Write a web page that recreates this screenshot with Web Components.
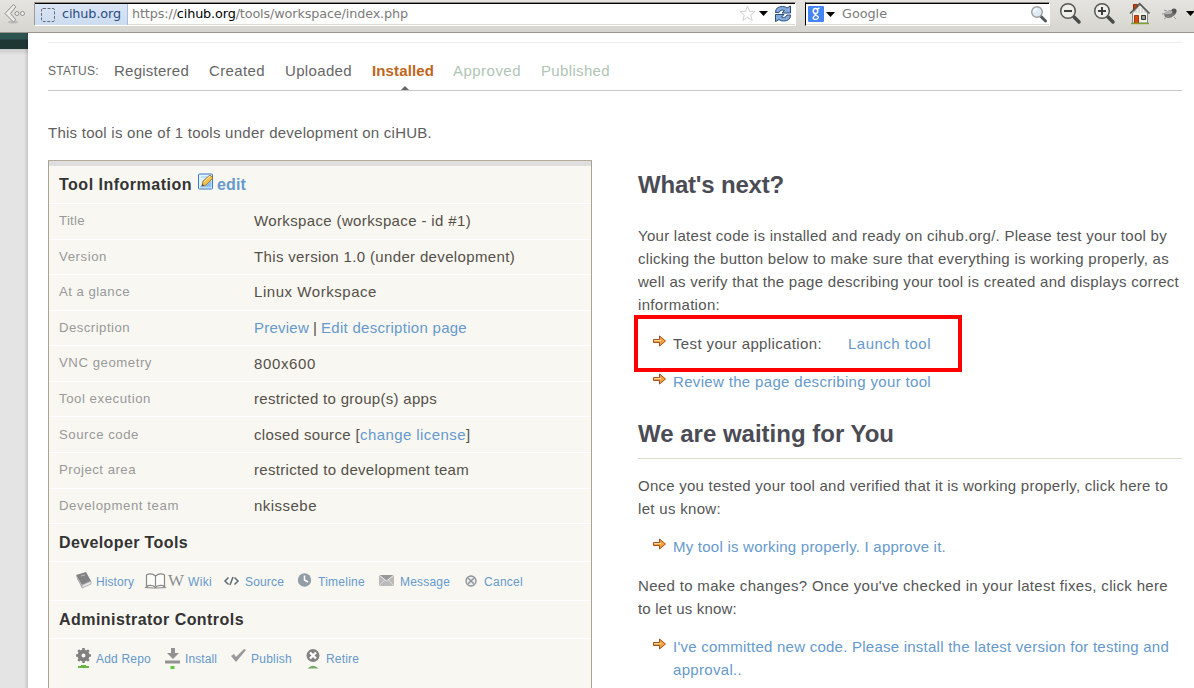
<!DOCTYPE html>
<html lang="en">
<head>
<meta charset="utf-8">
<title>Workspace tool status</title>
<style>
html,body{margin:0;height:688px;overflow:hidden;background:#fff;font-family:"Liberation Sans",Arial,sans-serif;color:#555}
</style>
</head>
<body>
<app-window></app-window>
<script>
const define = (name, html) => customElements.define(name, class extends HTMLElement {
  constructor(){ super(); const t=document.createElement('template'); t.innerHTML=html; this.attachShadow({mode:'open'}).append(t.content.cloneNode(true)); }
});

define('app-window', `<style>
:host{display:flex;flex-direction:column;height:688px;width:1194px;overflow:hidden}
main{display:flex;flex:1;min-height:0}
aside{width:28px;background:linear-gradient(90deg,transparent 24px,#0002),linear-gradient(#2e5452 0 6px,#1e3634 7px 16px,#c9c9c9 16px,#e4e4e4 22px);flex:none}
.page{flex:1;padding:9px 12px 0 20px;min-width:0}
.rule{height:1px;background:#ededed}
.cols{display:grid;grid-template-columns:544px 544px;column-gap:46px;align-items:start}
.intro{height:69px;display:flex;align-items:center;padding-top:14px;box-sizing:border-box;font-size:15px;color:#606060}
</style>
<browser-bar></browser-bar>
<main><aside></aside><div class="page"><div class="rule"></div><status-bar></status-bar>
<div class="intro"><ui-text w="384">This tool is one of 1 tools under development on ciHUB.</ui-text></div>
<div class="cols"><tool-panel></tool-panel><next-steps></next-steps></div></div></main>`);

define('browser-bar', `<style>
:host{display:flex;height:33px;box-sizing:border-box;border-bottom:1px solid #9a958c;background:linear-gradient(#e6e4e0,#d6d5cf);flex:none;font-family:"DejaVu Sans",sans-serif;font-size:12.8px;color:#7b7b7b;align-items:flex-start}
svg{display:block;flex:none}
.field{height:24px;margin-top:2px;box-sizing:border-box;background:#fff;border:1px solid #a09b93;border-top-color:#8e8982;border-right-color:#fff;border-bottom-color:#fff;box-shadow:inset 0 1px #000,inset 0 -1px #dedbd5;display:flex;align-items:center}
.url{width:762px;margin-left:8px}
.site{align-self:stretch;margin-top:1px;background:linear-gradient(#dbe5f4,#ccdcf0);border-right:1px solid #a8bddb;width:93px;box-sizing:border-box;display:flex;align-items:center;gap:6px;padding-left:5px;color:#2a4b82;flex:none}
.site ui-text,.path{position:relative;top:-1px}
.path{margin-left:4px;flex:1;display:flex}b{font-weight:400;color:#000}
.search{width:245px;margin-left:9px;padding-left:2px;border-left:1px solid #000}
.search ui-text{position:relative;top:-1px;margin-left:6px;flex:1}
</style>
<svg width="26" height="32" viewBox="0 0 26 32"><ellipse cx="13" cy="22" rx="5" ry="1.5" fill="#bdbbb6"/><path d="M13.5 4.500 5 13.500 13.500 22l2.300-2.200-5.300-6.300 5.300-6.700z" fill="#ecebe8" stroke="#908e89"/><circle cx="17" cy="13.500" r="2" fill="#eee" stroke="#918f8b"/><circle cx="22.500" cy="13.500" r="2" fill="#eee" stroke="#918f8b"/></svg>
<div class="field url">
 <div class="site"><svg width="16" height="16" viewBox="0 0 16 16"><rect x="1.500" y="1.500" width="13" height="13" rx="1.500" fill="none" stroke="#666d77" stroke-dasharray="3 1.500"/></svg><ui-text w="59">cihub.org</ui-text></div>
 <div class="path"><ui-text w="276">https://<b>cihub.org</b>/tools/workspace/index.php</ui-text></div>
 <svg width="56" height="20" viewBox="739 4 56 20"><path d="m747.500 6 2 5.300 5.500.2-4.300 3.500 1.500 5.400-4.700-3.100-4.700 3.100 1.500-5.400-4.300-3.500 5.500-.2z" fill="#fff" stroke="#d0d0d0"/><path d="M759 11h9l-4.500 5z" fill="#000"/><g fill="#85abd9" stroke="#284b80" stroke-linejoin="round"><path d="M775.500 12.500q0-6 7-6 3 0 4.500 1.500l3.500-2v7H782l2.500-2.500q-4-1.500-5.500 2z"/><path d="M790.500 15q0 6-7 6-3 0-4.500-1.500l-3.500 2v-7h8.500l-2.500 2.500q4 1.500 5.500-2z"/></g></svg>
</div>
<div class="field search"><svg width="28" height="18" viewBox="0 0 28 18"><rect y="1" width="16" height="16" rx="1" fill="#4385f4"/><g fill="none" stroke="#fff" stroke-width="1.400"><ellipse cx="7.500" cy="6" rx="2.300" ry="2.500"/><path d="M9 4.200 11.500 3M8 8.500q-2 1 .2 1.800 2.600 1 2 2.700-1 1.800-4 1.200-2.500-1 .8-3.700"/></g><path d="M18 7h9l-4.500 5z" fill="#000"/></svg><ui-text w="45">Google</ui-text>
<svg width="20" height="20" viewBox="0 0 20 20"><path d="m11.500 12 5 5" stroke="#54595b" stroke-width="3" stroke-linecap="round"/><circle cx="8" cy="8" r="5.300" fill="#dfebf5" stroke="#9c9f9e" stroke-width="1.400"/><path d="M5 8q0-3 3-3" stroke="#fff" fill="none" stroke-width="1.500"/></svg></div>
<svg width="144" height="32" viewBox="1050 0 144 32"><path d="m1074 17 5 5" stroke="#484b4a" stroke-width="3.500" stroke-linecap="round"/><circle cx="1068" cy="11" r="7.300" fill="#eeeeeb" stroke="#555753" stroke-width="1.500"/><path d="M1064 11h8" stroke="#3d403d" stroke-width="2"/><path d="m1108 17 5 5" stroke="#484b4a" stroke-width="3.500" stroke-linecap="round"/><circle cx="1102" cy="11" r="7.300" fill="#eeeeeb" stroke="#555753" stroke-width="1.500"/><path d="M1098 11h8M1102 7v8" stroke="#3d403d" stroke-width="2"/>
<path d="M1133.500 4.500h4v6h-4z" fill="#d2430c" stroke="#8d2b08"/><path d="M1132.500 13 1140 5l7.500 8v10h-15z" fill="#f1f1ed" stroke="#888"/><path d="M1136 10v3M1139 8v5M1142 8v5M1145 11v2" stroke="#c6c6c2"/><path d="m1130 13.500 9.700-10 9.800 10" fill="none" stroke="#555753" stroke-width="1.500"/><path d="M1134.500 15.500h4v8h-4z" fill="#d84b0c" stroke="#a73507"/><path d="M1141.500 15.500h4v4h-4z" fill="#979c92" stroke="#333"/><path d="M1131 23.500h18" stroke="#80a030" stroke-width="1.400"/>
<g fill="#686868"><ellipse cx="1170" cy="14" rx="6" ry="3.600" transform="rotate(-18 1170 14)" fill="#777"/><circle cx="1174" cy="11" r="2.600" fill="#555"/><path d="m1162 14 5-1m-3 6 5-3m5 1 2 2m-9-8-3-1" stroke="#999"/><ellipse cx="1168.500" cy="12.500" rx="4" ry="1.700" fill="#b4b4b4" transform="rotate(-10 1168 12)"/></g><path d="M1186 11h9l-4.500 5z"/></svg>`);

define('status-bar', `<style>
:host{display:flex;height:48px;box-sizing:border-box;border-bottom:1px solid #c9c9c9;align-items:center;font-size:15px;padding-top:8px;position:relative;color:#666}
.l{font-size:12px;margin-right:15px;padding-top:1px}ui-text{margin-right:20px}.on{color:#c0651a;font-weight:700;margin-right:19px}.off{color:#b0c4b5}
i{position:absolute;left:353px;bottom:0;border:4px solid transparent;border-bottom:4px solid #666;border-top:0}
</style><ui-text class="l" w="51">STATUS:</ui-text><ui-text w="75">Registered</ui-text><ui-text w="56">Created</ui-text><ui-text w="67">Uploaded</ui-text><ui-text w="62" class="on">Installed</ui-text><ui-text w="68" class="off">Approved</ui-text><ui-text w="69" class="off">Published</ui-text><i></i>`);

define('info-row', `<style>
:host{display:grid;grid-template-columns:195px 1fr;align-items:start;padding:8px 10px 0;border-bottom:1px solid #fff;font-size:15px;line-height:17px;color:#555048;box-sizing:border-box}
::slotted([slot=label]){font-size:13.2px;line-height:15px;color:#999;margin-top:var(--label-drop,1px)}
div{display:flex;padding-top:var(--value-drop,0)}
</style><slot name="label"></slot><div><slot></slot></div>`);

define('tool-panel', `<style>
:host{display:grid;grid-template-rows:38px 36px 35px 36px 35px 36px 35px 36px 36px 35px 38px 39px 38px 60px;box-sizing:border-box;border:1px solid #aaa18e;border-top-color:#b3aa98;background:#f8f7f2;border-bottom:0;height:540px;padding-top:5px;box-shadow:inset 0 5px #dedede;overflow:hidden}
h3{margin:0;font-size:16px;color:#333;display:flex;align-items:center;padding:0 10px;border-bottom:1px solid #fff}
h3 svg{margin:-6px 3px 0 6px}
.a{color:#6699cc}
nav{display:grid;align-items:center;padding-left:26px;border-bottom:1px solid #fff;font-size:12px;color:#69c;justify-content:start;padding-top:2px}
nav.d{grid-template-columns:21px 48px 44px 37px 20px 53px 20px 62px 20px 64px 20px 60px}
nav.b{grid-template-columns:21px 68px 21px 45px 21px 55px 20px 50px;height:37px;border:0;box-sizing:border-box}
nav svg{display:block;overflow:visible;position:relative;left:1px;top:-1px}
nav.d svg:nth-of-type(n+3){left:-1px}
.drop{--value-drop:1px}.low{--value-drop:1px;--label-drop:2px}
</style>
<h3><ui-text w="133">Tool Information</ui-text><svg width="16" height="17" viewBox="0 0 16 17"><rect x=".5" y="1" width="14" height="15" rx="1" fill="#e3f2ff" stroke="#3979c5"/><path d="M3 4h7M2 14h11V8L9 12H4z" fill="#83baf1" stroke="#9bcaf5"/><path d="m4 13 1-5 7-6 3 3-7 7z" fill="#f5bf4c" stroke="#9b7c49"/><path d="m6 9 6-6" stroke="#fff1af"/><path d="m4 13 .5-2 1.500 1.500z" fill="#333"/></svg><ui-text class="a" w="29">edit</ui-text></h3>
<info-row><ui-text slot="label" w="26">Title</ui-text><ui-text w="217">Workspace (workspace - id #1)</ui-text></info-row>
<info-row><ui-text slot="label" w="48">Version</ui-text><ui-text w="261">This version 1.0 (under development)</ui-text></info-row>
<info-row><ui-text slot="label" w="71">At a glance</ui-text><ui-text w="123">Linux Workspace</ui-text></info-row>
<info-row><ui-text slot="label" w="71">Description</ui-text><ui-text w="55" class="a">Preview</ui-text><ui-text w="12"> | </ui-text><ui-text w="146" class="a">Edit description page</ui-text></info-row>
<info-row class="drop"><ui-text slot="label" w="93">VNC geometry</ui-text><ui-text w="62">800x600</ui-text></info-row>
<info-row><ui-text slot="label" w="92">Tool execution</ui-text><ui-text w="183">restricted to group(s) apps</ui-text></info-row>
<info-row class="low"><ui-text slot="label" w="80">Source code</ui-text><ui-text w="106">closed source [</ui-text><ui-text w="106" class="a">change license</ui-text><ui-text w="5">]</ui-text></info-row>
<info-row><ui-text slot="label" w="77">Project area</ui-text><ui-text w="215">restricted to development team</ui-text></info-row>
<info-row><ui-text slot="label" w="120">Development team</ui-text><ui-text w="63">nkissebe</ui-text></info-row>
<h3><ui-text w="129">Developer Tools</ui-text></h3>
<nav class="d">
<svg width="16" height="18" viewBox="0 0 16 18"><path d="m0 3 10-3 5 9-9 4z" fill="#828282"/><path d="m0 3 6 10v3L1 7z" fill="#aaa"/><path d="m6 13 9-4v3l-9 4z" fill="#e8e8e8" stroke="#999" stroke-width=".7"/><path d="m5 4 4-1" stroke="#bbb"/></svg><ui-text w="38">History</ui-text>
<svg width="42" height="18" viewBox="0 0 42 18"><path d="M10.500 4Q6 .5 1.500 3v11q5-1.500 9 1 4-2.500 9-1V3Q15 .5 10.500 4v10M3 14l-2 1.500 8 .5h3l8-.5-2-1.500" fill="#fbfbf8" stroke="#888" stroke-width="1.200"/><text x="23" y="14" font-family="Liberation Serif,serif" font-size="17" textLength="16" lengthAdjust="spacingAndGlyphs" fill="#8b8e91">W</text></svg><ui-text w="24">Wiki</ui-text>
<svg width="16" height="14" viewBox="0 0 16 14"><path d="M4.500 3.500 1 7l3.500 3.500M10.500 3.500 14 7l-3.500 3.500M9 3 6 11" fill="none" stroke="#5d6973" stroke-width="1.500"/></svg><ui-text w="39">Source</ui-text>
<svg width="15" height="18" viewBox="0 0 15 18"><circle cx="7.500" cy="8" r="6.700" fill="#929da7"/><path d="M7.500 3.500V8L11 10" fill="none" stroke="#fff" stroke-width="1.500"/></svg><ui-text w="47">Timeline</ui-text>
<svg width="16" height="14" viewBox="0 0 16 14"><path d="M0 1h15v11H0z" fill="#bababa"/><path d="m0 1 7.500 6L15 1" fill="#999" stroke="#eee"/><path d="m0 12 5.500-6m9.500 6-5.500-6" stroke="#ddd"/></svg><ui-text w="50">Message</ui-text>
<svg width="14" height="16" viewBox="0 0 14 16"><circle cx="8" cy="8" r="5" fill="#eee" stroke="#8d9298" stroke-width="1.300"/><path d="m5.200 5.200 5.600 5.600m0-5.600-5.600 5.600" stroke="#8d9298" stroke-width="1.400"/></svg><ui-text w="39">Cancel</ui-text></nav>
<h3><ui-text w="185">Administrator Controls</ui-text></h3>
<nav class="b">
<svg width="16" height="20" viewBox="0 0 16 20"><circle cx="7.500" cy="7.500" r="4" fill="none" stroke="#808080" stroke-width="4"/><path d="M7.500 0v3m0 9v3M0 7.500h3m9 0h3M2.200 2.200l2 2m6.600 6.600 2 2m0-10.600-2 2M4.200 10.800l-2 2" stroke="#808080" stroke-width="2.500"/><path d="M2 20v-2h3v-1h5v1h3v2z" fill="#67b945"/></svg><ui-text w="55">Add Repo</ui-text>
<svg width="16" height="20" viewBox="0 0 16 20"><path d="M6 0h4v5h4l-6 6-6-6h4zM0 12.500h15v3H0z" fill="#929292"/><path d="M5.500 18h4v3h-4z" fill="#62c544"/></svg><ui-text w="32">Install</ui-text>
<svg width="16" height="20" viewBox="0 0 16 20"><path d="m0 8 3-2 2 3 8-8 2 1L5 14z" fill="#999"/></svg><ui-text w="41">Publish</ui-text>
<svg width="16" height="20" viewBox="0 0 16 20"><circle cx="6" cy="7.500" r="6.500" fill="#828282"/><path d="m3 4.500 6 6m0-6-6 6" stroke="#fff" stroke-width="2.400"/><path d="M.5 20.500q5.500-5.500 11 0z" fill="#75a966"/></svg><ui-text w="33">Retire</ui-text></nav>`);

define('arrow-item', `<style>:host{display:flex;align-items:flex-start;padding-left:15px;line-height:23px}svg{margin:3px 6px 0 0;flex:none}</style>
<svg width="14" height="13" viewBox="0 0 14 13"><path d="M.5 4.500h6V1L12.500 6l-6 5V7.500h-6z" fill="#f8a23e" stroke="#a0501f"/><path d="M1 5.500h7" stroke="#ffdca0"/></svg><div><slot></slot></div>`);

define('next-steps', `<style>
:host{display:block;font-size:15px;line-height:23px;color:#555}
h2{margin:0;font-size:24px;line-height:30px;color:#4b4b55;height:30px}
h2,p>ui-text,arrow-item ui-text.b{display:block}
p{margin:0}.a{color:#69c}
.one{padding-top:10px}.one+p{margin-top:24px}
.box{border:4px solid #f00;margin:-1px 0 0 -4px;width:328px;height:57px;box-sizing:border-box;padding-top:13px}
.box ui-text+ui-text{margin-left:26px}
.two{margin-top:26px;height:39px;border-bottom:1px solid #dddcd0}
</style>
<h2 class="one"><ui-text w="146">What's next?</ui-text></h2>
<p><ui-text w="529">Your latest code is installed and ready on cihub.org/. Please test your tool by</ui-text><ui-text w="531">clicking the button below to make sure that everything is working properly, as</ui-text><ui-text w="541">well as verify that the page describing your tool is created and displays correct</ui-text><ui-text w="82">information:</ui-text></p>
<div class="box"><arrow-item><ui-text w="149">Test your application:</ui-text><ui-text class="a" w="83">Launch tool</ui-text></arrow-item></div>
<arrow-item style="margin-top:-2px"><ui-text class="a" w="258">Review the page describing your tool</ui-text></arrow-item>
<h2 class="two"><ui-text w="256">We are waiting for You</ui-text></h2>
<p style="margin-top:15px"><ui-text w="530">Once you tested your tool and verified that it is working properly, click here to</ui-text><ui-text w="83">let us know:</ui-text></p>
<arrow-item style="margin-top:15px"><ui-text class="a" w="273">My tool is working properly. I approve it.</ui-text></arrow-item>
<p style="margin-top:16px"><ui-text w="530">Need to make changes? Once you've checked in your latest fixes, click here</ui-text><ui-text w="99">to let us know:</ui-text></p>
<arrow-item style="margin-top:15px"><ui-text class="a b" w="496">I've committed new code. Please install the latest version for testing and</ui-text><ui-text class="a b" w="69">approval..</ui-text></arrow-item>`);

/* A run of text tracked out or in to a set measure (the w attribute, in px). */
customElements.define('ui-text', class extends HTMLElement {
  constructor(){ super(); this.attachShadow({mode:'open'}).innerHTML='<style>:host{display:inline-block;white-space:pre;flex:none}span{display:inline-block}</style><span><slot></slot></span>'; }
  connectedCallback(){
    const run=this.shadowRoot.querySelector('span'), n=this.textContent.length;
    run.style.letterSpacing=((+this.getAttribute('w')-run.getBoundingClientRect().width)/n)+'px';
  }
});
</script>
</body>
</html>
